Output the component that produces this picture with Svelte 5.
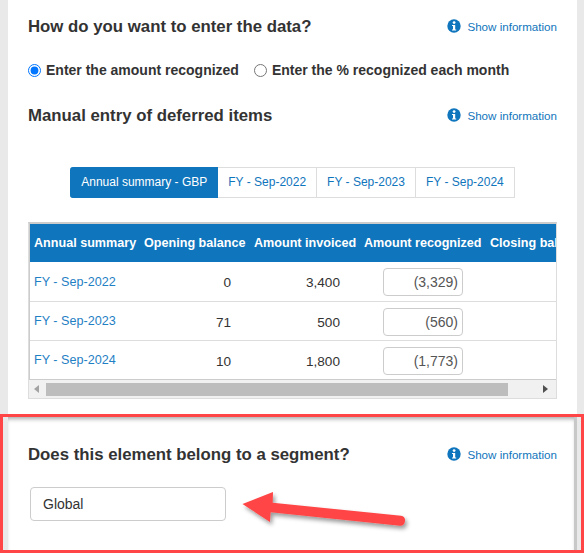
<script>
	const tabs = ['FY - Sep-2022', 'FY - Sep-2023', 'FY - Sep-2024'];
	const rows = [
		{ label: 'FY - Sep-2022', opening: '0', invoiced: '3,400', recognized: '(3,329)' },
		{ label: 'FY - Sep-2023', opening: '71', invoiced: '500', recognized: '(560)' },
		{ label: 'FY - Sep-2024', opening: '10', invoiced: '1,800', recognized: '(1,773)' }
	];
</script>

{#snippet info()}
	<a class="info" href="#info">
		<svg viewBox="0 0 14 14" width="14" height="14" aria-hidden="true">
			<circle cx="7" cy="7" r="6.7" fill="#0f75bc" />
			<circle cx="7.1" cy="3.6" r="1.4" fill="#fff" />
			<path d="M5 5.9h3.2v4.5h1v1.2H5v-1.2h1V7.1H5z" fill="#fff" />
		</svg>
		<span>Show information</span>
	</a>
{/snippet}

<div class="page">
	<div class="panel">
		<section class="top">
			<div class="head">
				<h2>How do you want to enter the data?</h2>
				{@render info()}
			</div>
			<div class="radios">
				<label><input type="radio" name="mode" checked /> Enter the amount recognized</label>
				<label><input type="radio" name="mode" /> Enter the % recognized each month</label>
			</div>
			<div class="head second">
				<h2>Manual entry of deferred items</h2>
				{@render info()}
			</div>
			<div class="tabs">
				<button class="tab active">Annual summary - GBP</button>
				{#each tabs as tab}
					<button class="tab">{tab}</button>
				{/each}
			</div>
			<div class="grid">
				<div class="scroller">
					<table>
						<thead>
							<tr>
								<th class="c1">Annual summary</th>
								<th class="c2">Opening balance</th>
								<th class="c3">Amount invoiced</th>
								<th class="c4">Amount recognized</th>
								<th class="c5">Closing balance</th>
							</tr>
						</thead>
						<tbody>
							{#each rows as row}
								<tr>
									<td><a href="#fy">{row.label}</a></td>
									<td class="num">{row.opening}</td>
									<td class="num wide">{row.invoiced}</td>
									<td class="amount"><input value={row.recognized} /></td>
									<td></td>
								</tr>
							{/each}
						</tbody>
					</table>
				</div>
				<div class="scrollbar">
					<span class="arrow left"></span>
					<div class="thumb"></div>
					<span class="arrow right"></span>
				</div>
			</div>
		</section>
		<section class="segment">
			<div class="head">
				<h2>Does this element belong to a segment?</h2>
				{@render info()}
			</div>
			<input class="select" value="Global" />
		</section>
	</div>
	<div class="callout"></div>
	<svg class="pointer" viewBox="0 0 584 553" width="584" height="553" aria-hidden="true">
		<defs>
			<filter id="shadow" x="-20%" y="-40%" width="140%" height="200%">
				<feDropShadow dx="2" dy="3" stdDeviation="2" flood-color="#000" flood-opacity="0.4" />
			</filter>
		</defs>
		<path
			d="M242.5 504 L273 492 L272.7 502.7 L401 515.8 Q405.5 516.5 405 521 Q404.5 526 400 525.7 L270.7 512.3 L270 522 Z"
			fill="#ff4545"
			filter="url(#shadow)"
		/>
	</svg>
</div>

<style>
	:global(body) {
		margin: 0;
		background: #e9e9e9;
	}

	.page {
		position: relative;
		width: 584px;
		height: 553px;
		overflow: hidden;
		padding: 0 7px 0 8px;
		box-sizing: border-box;
		font-family: "Liberation Sans", Arial, sans-serif;
		color: #333;
	}

	.panel {
		background: #fff;
		height: 100%;
		display: flex;
		flex-direction: column;
	}

	.top {
		padding: 17px 20px 0;
		height: 400px;
		box-sizing: border-box;
	}

	.head {
		display: flex;
		justify-content: space-between;
		align-items: center;
		height: 20px;
	}

	.head.second {
		margin-top: 26px;
	}

	h2 {
		margin: 0;
		font-size: 16.8px;
		font-weight: bold;
		color: #333;
	}

	.info {
		display: flex;
		align-items: center;
		gap: 6px;
		margin-bottom: 2px;
		font-size: 11.6px;
		color: #0f75bc;
		text-decoration: none;
	}

	.radios {
		display: flex;
		gap: 15px;
		margin-top: 23px;
		height: 20px;
		align-items: center;
		font-size: 14px;
		font-weight: bold;
	}

	.radios label {
		display: flex;
		align-items: center;
		gap: 5px;
	}

	.radios input {
		margin: 0;
		width: 13px;
		height: 13px;
	}

	.tabs {
		display: flex;
		justify-content: center;
		margin-top: 41px;
	}

	.tab {
		height: 31px;
		padding: 0 10px 2px;
		font: 12px "Liberation Sans", Arial, sans-serif;
		color: #0f75bc;
		background: #fff;
		border: 1px solid #ddd;
		border-left: 0;
	}

	.tab.active {
		color: #fff;
		background: #0f75bc;
		border-color: #0f75bc;
		border-radius: 3px 0 0 3px;
		padding: 0 10px 2px 11px;
	}

	.grid {
		margin-top: 24px;
		border: 1px solid #ddd;
		border-top: 2px solid #ccc;
	}

	.scroller {
		overflow: hidden;
		border-left: 1px solid #ccc;
		border-bottom: 1px solid #ccc;
	}

	table {
		border-collapse: collapse;
		table-layout: fixed;
		width: 680px;
		font-size: 12.6px;
	}

	th {
		height: 38px;
		padding: 0 4px;
		box-sizing: border-box;
		background: #0f75bc;
		color: #fff;
		font-weight: bold;
		text-align: left;
		white-space: nowrap;
	}

	.c1, .c2, .c3 {
		width: 110px;
	}

	.c4 {
		width: 126px;
	}

	td {
		height: 39px;
		padding: 0 4px;
		box-sizing: border-box;
		border-top: 1px solid #ddd;
		font-size: 13.6px;
	}

	tbody tr:first-child td {
		border-top: 0;
	}

	td a {
		color: #1f80c4;
		text-decoration: none;
		font-size: 12.6px;
	}

	.num {
		text-align: right;
		padding-top: 3px;
		padding-right: 19px;
	}

	.num.wide {
		padding-right: 20px;
	}

	.amount {
		padding: 0 0 0 23px;
	}

	.amount input {
		display: block;
		width: 80px;
		height: 28px;
		margin-top: 2px;
		box-sizing: border-box;
		border: 1px solid #ccc;
		border-radius: 4px;
		padding: 0 4px;
		text-align: right;
		font: 14px "Liberation Sans", Arial, sans-serif;
		color: #555;
	}

	.scrollbar {
		display: flex;
		align-items: center;
		height: 18px;
		background: #f1f1f1;
		padding: 0 3px 0 0;
	}

	.thumb {
		height: 13px;
		width: 462px;
		margin: 0 0 0 7px;
		background: #bdbdbd;
	}

	.arrow {
		width: 0;
		height: 0;
		border-top: 4px solid transparent;
		border-bottom: 4px solid transparent;
	}

	.arrow.left {
		margin-left: 5px;
		border-right: 5px solid #a3a3a3;
	}

	.arrow.right {
		margin-left: auto;
		margin-right: 5px;
		border-left: 5px solid #505050;
	}

	.segment {
		flex: 1;
		padding: 28px 17px 0 20px;
		box-shadow: inset 0 4px 4px -2px #aaa;
		margin-top: 17px;
		border-right: 3px solid #c8c8c8;
	}

	.select {
		display: block;
		width: 196px;
		height: 34px;
		margin: 22px 0 0 2px;
		padding: 0 12px;
		box-sizing: border-box;
		border: 1px solid #ccc;
		border-radius: 4px;
		font: 14px "Liberation Sans", Arial, sans-serif;
		color: #333;
	}

	.callout {
		position: absolute;
		left: 0;
		top: 414px;
		width: 584px;
		height: 139px;
		box-sizing: border-box;
		border: 3px solid #ff4545;
		pointer-events: none;
	}

	.pointer {
		position: absolute;
		left: 0;
		top: 0;
		pointer-events: none;
	}
</style>
